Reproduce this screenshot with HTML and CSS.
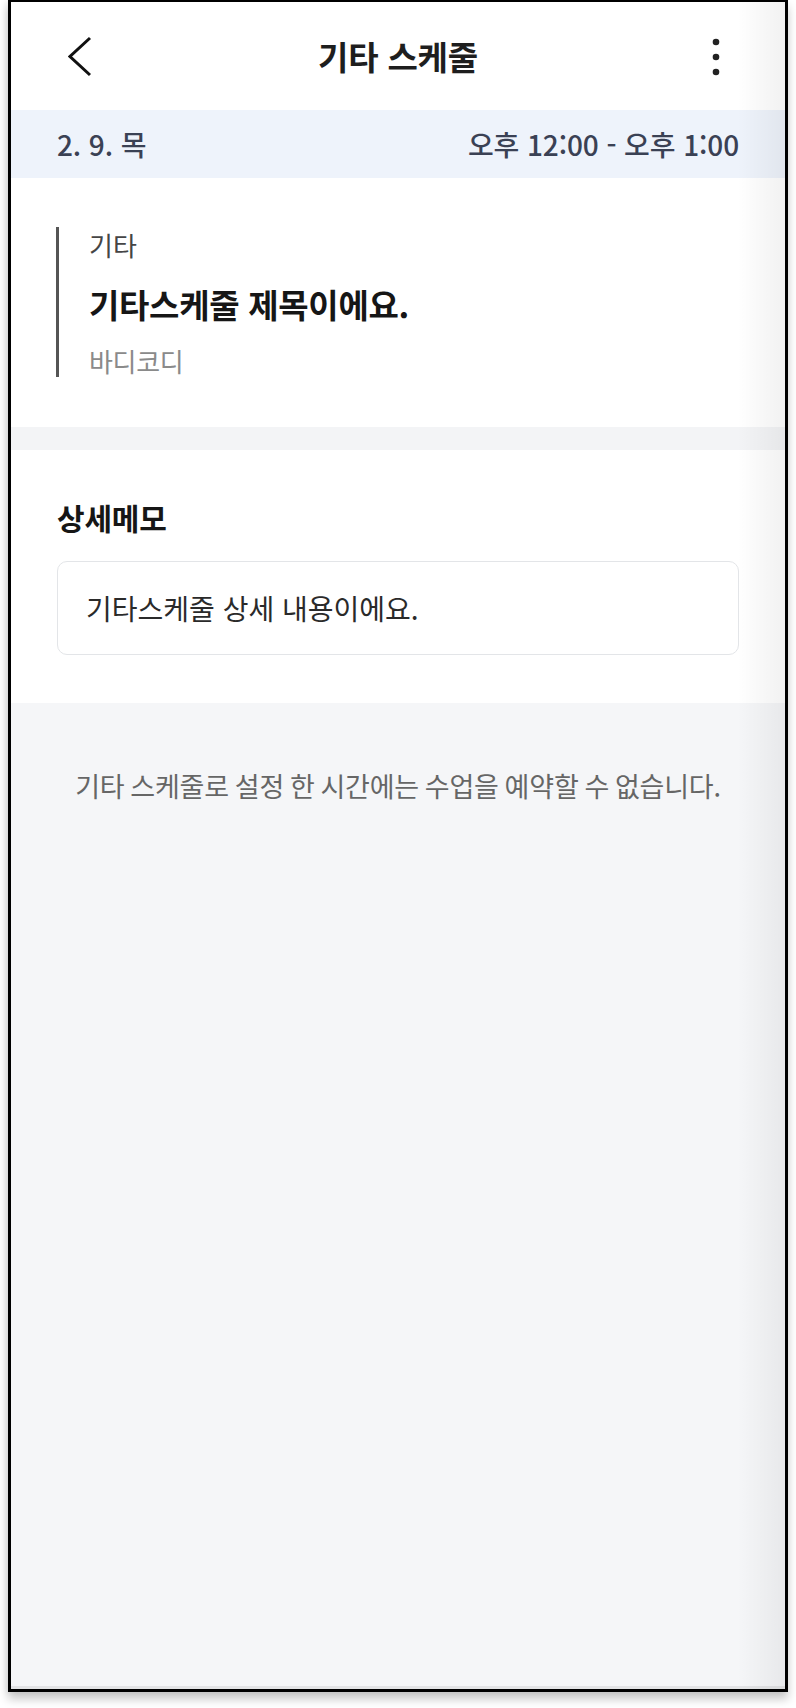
FILE: index.html
```html
<!DOCTYPE html>
<html lang="ko">
<head>
<meta charset="utf-8">
<title>기타 스케줄</title>
<link rel="stylesheet" href="styles.css">
</head>
<body>
<div class="frame">
  <header class="topbar">
    <button class="icon-btn back" aria-label="뒤로">
      <svg width="26" height="42" viewBox="0 0 26 42"><polyline points="22,2 2,20.5 22,39" fill="none" stroke="#111" stroke-width="3" stroke-linejoin="miter" stroke-linecap="butt"/></svg>
    </button>
    <h1 class="title">기타 스케줄</h1>
    <button class="icon-btn more" aria-label="더보기">
      <svg width="8" height="38" viewBox="0 0 8 38"><circle cx="4" cy="4" r="3.3" fill="#222"/><circle cx="4" cy="19" r="3.3" fill="#222"/><circle cx="4" cy="34" r="3.3" fill="#222"/></svg>
    </button>
  </header>

  <div class="dateband">
    <span class="date">2. 9. 목</span>
    <span class="time">오후 12:00 - 오후 1:00</span>
  </div>

  <section class="card-section">
    <div class="event">
      <div class="kicker">기타</div>
      <div class="event-title">기타스케줄 제목이에요.</div>
      <div class="event-sub">바디코디</div>
    </div>
  </section>

  <div class="divider"></div>

  <section class="memo-section">
    <h2 class="memo-label">상세메모</h2>
    <div class="memo-box">기타스케줄 상세 내용이에요.</div>
  </section>

  <footer class="notice">
    <p>기타 스케줄로 설정 한 시간에는 수업을 예약할 수 없습니다.</p>
  </footer>
</div>
</body>
</html>
```

FILE: styles.css
```css
* { box-sizing: border-box; }

html, body {
  margin: 0;
  padding: 0;
  background: #ffffff;
}

body {
  font-family: "Noto Sans CJK KR", "Noto Sans", sans-serif;
  width: 796px;
  height: 1708px;
  overflow: hidden;
}

.frame {
  position: relative;
  margin-left: 8px;
  width: 780px;
  height: 1692px;
  border-style: solid;
  border-color: #000;
  border-width: 2px 3px 3px 3px;
  background: #ffffff;
  display: flex;
  flex-direction: column;
  box-shadow: 0 7px 9px rgba(0, 0, 0, 0.22), -3px 0 6px rgba(0, 0, 0, 0.05);
}

.frame::after {
  content: "";
  position: absolute;
  top: 0;
  right: 0;
  bottom: 0;
  width: 48px;
  background: linear-gradient(to right, rgba(0, 0, 0, 0), rgba(0, 0, 0, 0.055));
  pointer-events: none;
}

.frame::before {
  content: "";
  position: absolute;
  left: 0;
  right: 0;
  bottom: 0;
  height: 3px;
  background: rgba(0, 0, 0, 0.07);
  pointer-events: none;
}

/* Header */
.topbar {
  height: 108px;
  display: grid;
  grid-template-columns: 1fr auto 1fr;
  align-items: center;
}

.icon-btn {
  border: 0;
  background: none;
  padding: 0;
  display: flex;
}

.back {
  justify-self: start;
  margin-left: 57px;
  margin-top: 1px;
}

.more {
  justify-self: end;
  margin-right: 65px;
  margin-top: 1px;
}

.title {
  margin: 0;
  font-size: 33px;
  line-height: 42px;
  font-weight: 700;
  color: #1e1e1e;
  letter-spacing: -0.2px;
}

/* Date band */
.dateband {
  height: 68px;
  background: #eef3fb;
  display: flex;
  align-items: center;
  justify-content: space-between;
  padding: 0 46px;
  font-size: 28px;
  line-height: 36px;
  font-weight: 500;
  color: #3a4154;
  letter-spacing: -0.1px;
}

/* Event card */
.card-section {
  padding: 49px 46px 50px 45px;
}

.event {
  border-left: 3px solid #555555;
  padding: 2px 0 0 30px;
}

.kicker {
  font-size: 26px;
  line-height: 32px;
  color: #454545;
}

.event-title {
  margin-top: 23px;
  font-size: 33px;
  line-height: 40px;
  font-weight: 700;
  color: #161616;
  letter-spacing: -0.3px;
}

.event-sub {
  margin-top: 21px;
  font-size: 26px;
  line-height: 32px;
  color: #8a8a8a;
  letter-spacing: -0.3px;
}

.divider {
  height: 23px;
  background: #f3f4f6;
}

/* Memo */
.memo-section {
  padding: 49px 46px 48px 46px;
}

.memo-label {
  margin: 0;
  font-size: 30px;
  line-height: 36px;
  font-weight: 700;
  color: #161616;
  letter-spacing: -0.2px;
}

.memo-box {
  margin-top: 26px;
  height: 94px;
  border: 1px solid #e3e5e8;
  border-radius: 10px;
  display: flex;
  align-items: center;
  padding: 0 28px;
  font-size: 28px;
  line-height: 34px;
  color: #2a2a2a;
  letter-spacing: 0;
}

/* Notice */
.notice {
  flex: 1;
  background: #f5f6f8;
  padding-top: 66px;
}

.notice p {
  margin: 0;
  text-align: center;
  font-size: 27px;
  line-height: 34px;
  color: #666666;
  letter-spacing: -0.2px;
  word-spacing: -1.5px;
}
```
